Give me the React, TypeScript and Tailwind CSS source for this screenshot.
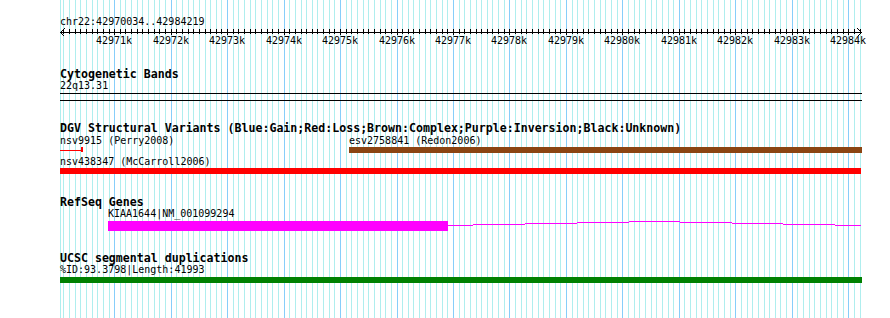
const START = 42970034;
const SCALE = 0.05647;
const LEFT = 59.6;

const toX = (bp: number) => Math.round(LEFT + (bp - START) * SCALE);

const TICKS: Array<{ bp: number; x: number; major: boolean }> = [];
for (let bp = 42970100; bp <= 42984200; bp += 100) {
  TICKS.push({ bp, x: toX(bp), major: bp % 1000 === 0 });
}

// intron hat of the RefSeq gene, drawn as pixel steps
const INTRON: Array<[number, number, number]> = [
  [448, 473, 4],
  [473, 525, 3],
  [525, 577, 2],
  [577, 629, 1],
  [629, 680, 0],
  [680, 732, 1],
  [732, 783, 2],
  [783, 835, 3],
  [835, 861, 4],
];

function Grid() {
  return (
    <svg className="absolute inset-0" width={890} height={318}>
      <rect x={60} y={0} width={1} height={318} fill="#afeeee" />
      {TICKS.map((t) => (
        <rect key={t.bp} x={t.x} y={0} width={1} height={318} fill={t.major ? '#87cefa' : '#afeeee'} />
      ))}
    </svg>
  );
}

function Ruler() {
  return (
    <svg width={890} height={20} className="-ml-[60px] block overflow-visible">
      <rect x={60} y={4} width={802} height={1} fill="#000" />
      <path
        d="M60.5 4.5 L64.5 0.5 M60.5 4.5 L64.5 8.5 M861.5 4.5 L857.5 0.5 M861.5 4.5 L857.5 8.5"
        stroke="#000"
        strokeWidth={1}
        fill="none"
        shapeRendering="crispEdges"
      />
      {TICKS.map((t) => (
        <rect key={t.bp} x={t.x} y={1} width={1} height={t.major ? 6 : 5} fill="#000" />
      ))}
      {TICKS.filter((t) => t.major).map((t) => (
        <text
          key={t.bp}
          x={t.x}
          y={16}
          textAnchor="middle"
          fontSize={10}
          fontFamily="'DejaVu Sans Mono', monospace"
          fill="#000"
        >
          {`${t.bp / 1000}k`}
        </text>
      ))}
    </svg>
  );
}

function Title({ children, className = '' }: { children: string; className?: string }) {
  return (
    <p className={`h-[12px] whitespace-nowrap text-[11.6px] font-bold leading-[12px] text-black ${className}`}>
      {children}
    </p>
  );
}

function Label({ children, className = '' }: { children: string; className?: string }) {
  return <span className={`block h-[12px] whitespace-nowrap text-[10px] leading-[12px] text-black ${className}`}>{children}</span>;
}

export default function App() {
  return (
    <div className="relative h-[318px] w-[890px] overflow-hidden bg-white font-['DejaVu_Sans_Mono',monospace]">
      <Grid />
      <div className="relative w-[862px] pl-[60px] pt-[15px]">
        <p className="h-[13px] whitespace-nowrap text-[10px] leading-[13px] text-black">chr22:42970034..42984219</p>
        <Ruler />

        <Title className="mt-[20px]">Cytogenetic Bands</Title>
        <Label>22q13.31</Label>
        <div className="h-[9px] pt-px">
          <div className="h-px w-[802px] bg-black" />
          <div className="mt-[6px] h-px w-[802px] bg-black" />
        </div>

        <Title className="mt-[21px]">DGV Structural Variants (Blue:Gain;Red:Loss;Brown:Complex;Purple:Inversion;Black:Unknown)</Title>
        <div className="mt-px flex">
          <Label className="w-[289px] shrink-0">nsv9915 (Perry2008)</Label>
          <Label>esv2758841 (Redon2006)</Label>
        </div>
        <div className="flex h-[6px] items-start">
          <div className="flex w-[289px] shrink-0 items-center">
            <div className="mt-[2px] h-px w-[21px] bg-[#ff0000]" />
            <div className="h-[5px] w-[2px] bg-[#ff0000]" />
          </div>
          <div className="h-[6px] w-[513px] bg-[#8b4513]" />
        </div>
        <Label className="mt-[3px]">nsv438347 (McCarroll2006)</Label>
        <div className="h-[6px] w-[801px] bg-[#ff0000]" />

        <Title className="mt-[22px]">RefSeq Genes</Title>
        <Label className="ml-[48px]">KIAA1644|NM_001099294</Label>
        <svg width={802} height={10} className="mt-px block">
          <rect x={48} y={0} width={340} height={10} fill="#ff00ff" />
          {INTRON.map(([a, b, y]) => (
            <rect key={a} x={a - 60} y={y} width={b - a} height={1} fill="#ff00ff" />
          ))}
        </svg>

        <Title className="mt-[21px]">UCSC segmental duplications</Title>
        <Label>%ID:93.3798|Length:41993</Label>
        <div className="mt-px h-[6px] w-[802px] bg-[#008000]" />
      </div>
    </div>
  );
}
